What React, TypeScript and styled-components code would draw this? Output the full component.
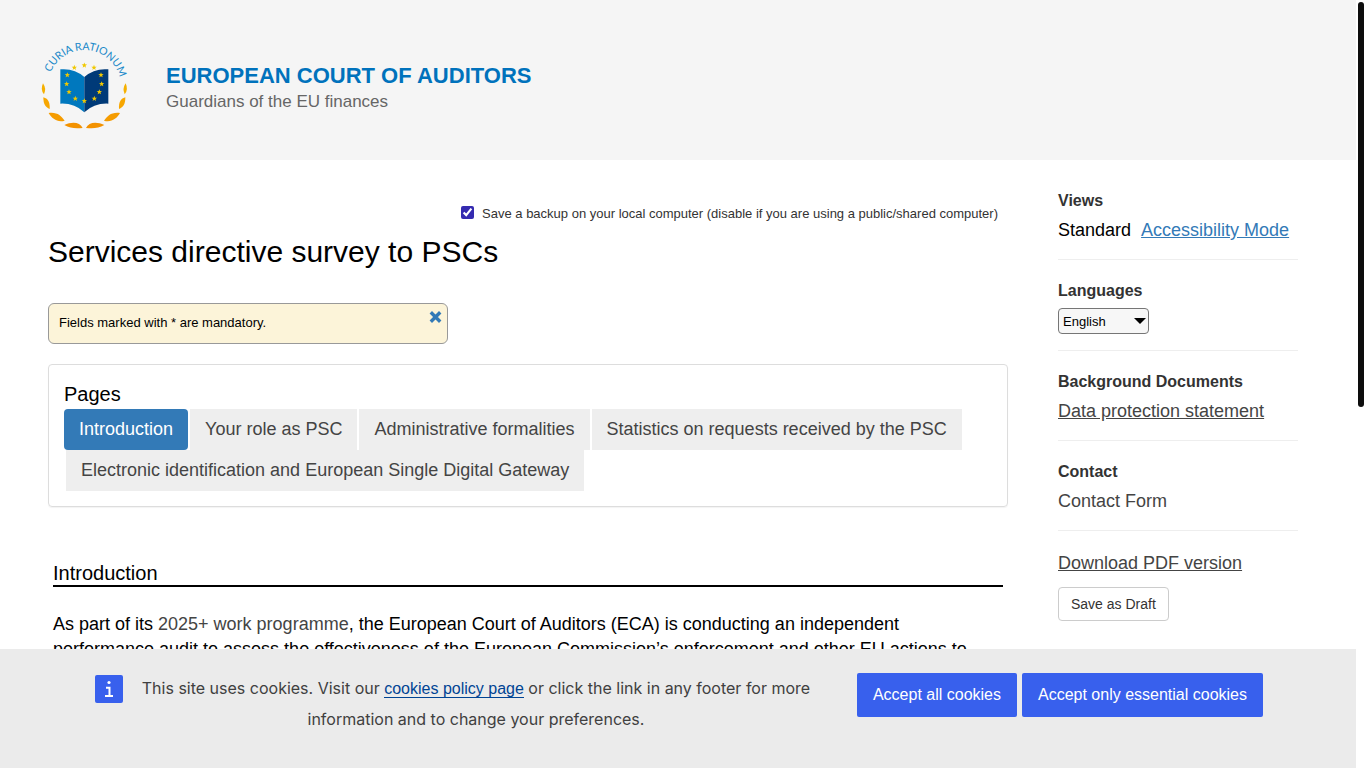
import React from "react";
import styled, { createGlobalStyle } from "styled-components";

const GlobalStyle = createGlobalStyle`
  *, *::before, *::after { box-sizing: border-box; }
  body {
    margin: 0;
    padding-right: 10px;
    background: #fff;
    color: #000;
    font: 18px/25px "Liberation Sans", Arial, sans-serif;
  }
  h1, h2, h3, p, ul { margin: 0; padding: 0; font-weight: normal; }
  html { scrollbar-width: none; }
`;

const Header = styled.header`
  display: flex;
  align-items: center;
  gap: 26px;
  padding: 30px 30px 20px;
  background: #f5f5f5;
`;

const Logo = styled.svg`
  width: 110px;
  height: 110px;
  flex: none;
`;

const Institution = styled.div`
  display: flex;
  flex-direction: column;
  padding-top: 6px;
`;

const InstitutionName = styled.p`
  color: #0072bc;
  font-size: 22px;
  line-height: 28px;
  font-weight: bold;
`;

const Tagline = styled.p`
  color: #666;
  font-size: 17px;
  line-height: 24px;
`;

const Layout = styled.div`
  display: flex;
  align-items: flex-start;
  gap: 50px;
  max-width: 1260px;
  margin: 0 auto;
  padding-right: 10px;
`;

const Main = styled.main`
  flex: 1;
  min-width: 0;
  padding: 40px 0 160px;
`;

const BackupOption = styled.label`
  display: flex;
  align-items: center;
  justify-content: flex-end;
  gap: 8px;
  padding: 5px 10px 3px 0;
  color: #333;
  font-size: 13px;
  line-height: 18px;
`;

const Checkbox = styled.input`
  width: 13px;
  height: 13px;
  margin: 0 0 3px;
  accent-color: #352bb0;
`;

const Title = styled.h1`
  padding-top: 6px;
  font-size: 30px;
  line-height: 40px;
`;

const Notice = styled.div`
  display: flex;
  justify-content: space-between;
  align-items: flex-start;
  width: 400px;
  max-width: 100%;
  margin-top: 31px;
  padding: 5px 5px 11px 10px;
  border: 1px solid #999;
  border-radius: 6px;
  background: #fcf4d9;
  font-size: 13px;
  line-height: 18px;
`;

const NoticeText = styled.p`
  padding-top: 5px;
`;

const CloseButton = styled.button`
  display: flex;
  padding: 2px 0;
  border: 0;
  background: none;
  cursor: pointer;
`;

const Panel = styled.nav`
  margin-top: 20px;
  padding: 15px;
  border: 1px solid #ddd;
  border-radius: 4px;
  box-shadow: 0 1px 1px rgba(0, 0, 0, 0.05);
`;

const PanelTitle = styled.h2`
  font-size: 20px;
  line-height: 29px;
`;

const Tabs = styled.ul`
  display: flex;
  flex-wrap: wrap;
  list-style: none;
`;

const TabItem = styled.li`
  & + & { margin-left: 2px; }
`;

const Tab = styled.a<{ $active?: boolean }>`
  display: block;
  padding: 8px 15px;
  border-radius: ${(p) => (p.$active ? "4px" : "0")};
  background: ${(p) => (p.$active ? "#337ab7" : "#eee")};
  color: ${(p) => (p.$active ? "#fff" : "#444")};
  text-decoration: none;
`;

const Article = styled.section`
  padding: 54px 5px 0;
`;

const SectionTitle = styled.h2`
  margin-bottom: 25px;
  border-bottom: 2px solid #000;
  font-size: 20px;
  line-height: 24px;
`;

const TextLink = styled.a<{ $tone?: "blue"; $underline?: boolean }>`
  color: ${(p) => (p.$tone === "blue" ? "#337ab7" : "#444")};
  text-decoration: ${(p) => (p.$underline ? "underline" : "none")};
`;

const Sidebar = styled.aside`
  flex: none;
  width: 240px;
  padding-top: 10px;
  line-height: 26px;
`;

const SideSection = styled.section`
  padding: 20px 0 16px;
  border-bottom: 1px solid #eee;
`;

const SideLabel = styled.h3`
  display: block;
  margin-bottom: 5px;
  color: #333;
  font-size: 16px;
  line-height: 22px;
  font-weight: bold;
`;

const ViewRow = styled.div`
  display: flex;
  gap: 10px;
`;

const SelectBox = styled.div`
  display: grid;
  width: 91px;
  align-items: center;
  padding-top: 1px;
`;

const LanguageSelect = styled.select`
  grid-area: 1 / 1;
  appearance: none;
  height: 26px;
  padding: 0 4px;
  border: 1px solid #767676;
  border-radius: 4px;
  background: #f7f7f7;
  color: #000;
  font: 13px "Liberation Sans", Arial, sans-serif;
`;

const Caret = styled.svg`
  grid-area: 1 / 1;
  justify-self: end;
  margin-right: 3px;
  pointer-events: none;
`;

const SideActions = styled.div`
  display: flex;
  flex-direction: column;
  align-items: flex-start;
  gap: 11px;
  padding-top: 19px;
`;

const DraftButton = styled.button`
  height: 34px;
  padding: 0 12px;
  border: 1px solid #ccc;
  border-radius: 4px;
  background: #fff;
  color: #333;
  font: 14px "Liberation Sans", Arial, sans-serif;
`;

const CookieBanner = styled.div`
  position: fixed;
  left: 0;
  right: 10px;
  bottom: 0;
  background: #ebebeb;
`;

const CookieInner = styled.div`
  display: flex;
  align-items: flex-start;
  max-width: 1170px;
  margin: 0 auto;
  padding: 24px 0 33px 2px;
`;

const InfoIcon = styled.svg`
  flex: none;
  width: 28px;
  height: 28px;
  margin-top: 2px;
`;

const CookieText = styled.p`
  flex: 1;
  padding: 0 10px;
  margin-right: 28px;
  color: #404040;
  text-align: center;
  font-family: Inter, sans-serif;
  font-size: 16px;
  line-height: 31px;
`;

const PolicyLink = styled.a`
  border-bottom: 1px solid #004494;
  color: #004494;
  font-family: "Liberation Sans", Arial, sans-serif;
  text-decoration: none;
`;

const CookieActions = styled.div`
  display: flex;
  gap: 5px;
`;

const CookieButton = styled.button`
  height: 44px;
  padding: 0 16px;
  border: 0;
  border-radius: 2px;
  background: #3860ed;
  color: #fff;
  font: 16px "Liberation Sans", Arial, sans-serif;
  white-space: nowrap;
`;

const ScrollRail = styled.div`
  position: fixed;
  top: 0;
  right: 0;
  bottom: 0;
  width: 10px;
  padding: 2px;
  background: #fff;
`;

const ScrollThumb = styled.div`
  width: 6px;
  height: 53%;
  border-radius: 3px;
  background: #0d0d0d;
`;

const starCenters: [number, number][] = [
  [163, 106], [192, 113], [133, 113], [213, 135], [112, 135], [215, 162],
  [110, 162], [208, 186], [117, 186], [193, 206], [136, 206], [163, 213],
];

function starPoints(cx: number, cy: number) {
  return Array.from({ length: 10 }, (_, i) => {
    const r = i % 2 ? 3.6 : 8.5;
    const a = (Math.PI * i) / 5 - Math.PI / 2;
    return `${(cx + r * Math.cos(a)).toFixed(1)},${(cy + r * Math.sin(a)).toFixed(1)}`;
  }).join(" ");
}

function Leaves() {
  return (
    <g fill="#f59c00">
      <path d="M39 160 Q50 176 42 193 Q30 180 39 160Z" fill="#f5b000" />
      <path d="M40 202 C56 206 60 220 59 237 C46 232 40 222 40 202Z" fill="#f7a600" />
      <path d="M56 249 C84 246 92 258 104 272 C82 278 66 266 56 249Z" />
      <path d="M103 285 C126 274 150 276 158 294 C138 295 120 296 103 285Z" fill="#f39200" />
    </g>
  );
}

function CourtLogo() {
  return (
    <Logo viewBox="0 0 330 330" role="img" aria-label="Curia Rationum">
      <defs>
        <path id="motto-arc" d="M62 128 A109 109 0 0 1 272 170" />
      </defs>
      <text fill="#2089c9" fontFamily="Lato, sans-serif" fontSize="32">
        <textPath href="#motto-arc">CURIA RATIONUM</textPath>
      </text>
      <path d="M91 118 Q133 114 163 141 V247 Q133 219 91 221Z" fill="#0078be" />
      <path d="M235 118 Q193 114 163 141 V247 Q193 219 235 221Z" fill="#003a78" />
      <g fill="#f0c800">
        {starCenters.map(([x, y]) => (
          <polygon key={`${x}-${y}`} points={starPoints(x, y)} />
        ))}
      </g>
      <Leaves />
      <g transform="translate(326 0) scale(-1 1)">
        <Leaves />
      </g>
    </Logo>
  );
}

const pages = [
  "Introduction",
  "Your role as PSC",
  "Administrative formalities",
  "Statistics on requests received by the PSC",
  "Electronic identification and European Single Digital Gateway",
];

export default function App() {
  return (
    <>
      <GlobalStyle />
      <Header>
        <CourtLogo />
        <Institution>
          <InstitutionName>EUROPEAN COURT OF AUDITORS</InstitutionName>
          <Tagline>Guardians of the EU finances</Tagline>
        </Institution>
      </Header>

      <Layout>
        <Main>
          <BackupOption>
            <Checkbox type="checkbox" defaultChecked />
            Save a backup on your local computer (disable if you are using a public/shared computer)
          </BackupOption>
          <Title>Services directive survey to PSCs</Title>
          <Notice>
            <NoticeText>Fields marked with * are mandatory.</NoticeText>
            <CloseButton type="button" aria-label="Close">
              <svg width="13" height="12" viewBox="0 0 13 12">
                <path d="M3 2.5 10 9.5M10 2.5 3 9.5" stroke="#337ab7" strokeWidth="3.4" strokeLinecap="square" />
              </svg>
            </CloseButton>
          </Notice>

          <Panel aria-label="Pages">
            <PanelTitle>Pages</PanelTitle>
            <Tabs>
              {pages.map((page, i) => (
                <TabItem key={page}>
                  <Tab href="#" $active={i === 0}>{page}</Tab>
                </TabItem>
              ))}
            </Tabs>
          </Panel>

          <Article>
            <SectionTitle>Introduction</SectionTitle>
            <p>
              As part of its <TextLink href="#">2025+ work programme</TextLink>, the European Court of
              Auditors (ECA) is conducting an independent performance audit to assess the effectiveness
              of the European Commission’s enforcement and other EU actions to
            </p>
          </Article>
        </Main>

        <Sidebar>
          <SideSection>
            <SideLabel>Views</SideLabel>
            <ViewRow>
              <span>Standard</span>
              <TextLink href="#" $tone="blue" $underline>Accessibility Mode</TextLink>
            </ViewRow>
          </SideSection>
          <SideSection>
            <SideLabel as="label" htmlFor="language">Languages</SideLabel>
            <SelectBox>
              <LanguageSelect id="language" defaultValue="en">
                <option value="en">English</option>
              </LanguageSelect>
              <Caret width="12" height="6" viewBox="0 0 12 6">
                <path d="M0 0H12L6 6Z" fill="#000" />
              </Caret>
            </SelectBox>
          </SideSection>
          <SideSection>
            <SideLabel>Background Documents</SideLabel>
            <TextLink href="#" $underline>Data protection statement</TextLink>
          </SideSection>
          <SideSection>
            <SideLabel>Contact</SideLabel>
            <TextLink href="#">Contact Form</TextLink>
          </SideSection>
          <SideActions>
            <TextLink href="#" $underline>Download PDF version</TextLink>
            <DraftButton type="button">Save as Draft</DraftButton>
          </SideActions>
        </Sidebar>
      </Layout>

      <CookieBanner>
        <CookieInner>
          <InfoIcon viewBox="0 0 28 28" aria-hidden="true">
            <rect width="28" height="28" rx="2" fill="#3860ed" />
            <circle cx="14" cy="7.5" r="1.6" fill="#fff" />
            <path d="M11 12.7H14.5V21M10 21H18" fill="none" stroke="#fff" strokeWidth="2" />
          </InfoIcon>
          <CookieText>
            This site uses cookies. Visit our <PolicyLink href="#">cookies policy page</PolicyLink> or
            click the link in any footer for more information and to change your preferences.
          </CookieText>
          <CookieActions>
            <CookieButton type="button">Accept all cookies</CookieButton>
            <CookieButton type="button">Accept only essential cookies</CookieButton>
          </CookieActions>
        </CookieInner>
      </CookieBanner>

      <ScrollRail aria-hidden="true">
        <ScrollThumb />
      </ScrollRail>
    </>
  );
}
